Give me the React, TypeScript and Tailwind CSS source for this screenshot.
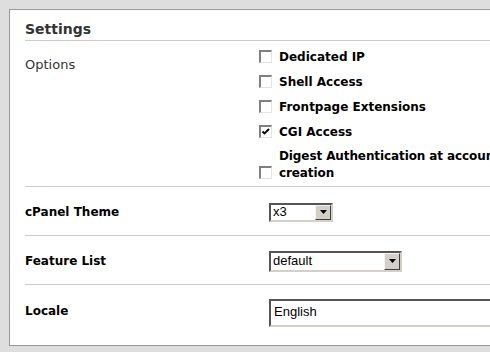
import React from "react";

const font = { fontFamily: '"DejaVu Sans", Verdana, sans-serif' };

function Checkbox({ checked }: { checked?: boolean }) {
  return (
    <div className="relative w-[13px] h-[13px] shrink-0 bg-white border-t-[#808080] border-l-[#808080] border-b-[#e4e4e4] border-r-[#e4e4e4] border-t-2 border-l-2 border-b border-r">
      {checked && (
        <svg className="absolute left-0 top-0" width="10" height="10" viewBox="0 0 10 10">
          <path d="M1.5 4.5 L3.5 6.5 L8 2" stroke="#000" strokeWidth="1.8" fill="none" />
        </svg>
      )}
    </div>
  );
}

function Select({ value, width, height }: { value: string; width: string; height: string }) {
  return (
    <div
      className={`flex items-center bg-white border-2 border-t-[#555] border-l-[#555] border-b-[#d4d0c8] border-r-[#d4d0c8] ${width} ${height}`}
    >
      <span className="flex-1 pl-[2px] text-[13px] text-black" style={{ fontFamily: '"Liberation Sans", Arial, sans-serif' }}>
        {value}
      </span>
      <div className="w-[16px] h-full flex items-center justify-center bg-[#d4d0c8] border border-t-[#f4f4f4] border-l-[#f4f4f4] border-b-[#404040] border-r-[#404040]">
        <svg width="7" height="4" viewBox="0 0 7 4">
          <path d="M0 0 H7 L3.5 4 Z" fill="#000" />
        </svg>
      </div>
    </div>
  );
}

export default function App() {
  const opts: { label: React.ReactNode; checked?: boolean }[] = [
    { label: "Dedicated IP" },
    { label: "Shell Access" },
    { label: "Frontpage Extensions" },
    { label: "CGI Access", checked: true },
  ];
  return (
    <div className="w-[490px] h-[352px] bg-[#dedede] pt-[9px] pl-[9px] overflow-hidden" style={font}>
      <div className="h-[337px] bg-white border-t border-l border-b border-[#999] pl-[15px]">
        <div className="h-[31px] border-b border-[#cccccc] flex items-end pb-[4px]">
          <span className="text-[14px] font-bold text-[#333] leading-none">Settings</span>
        </div>
        <div className="h-[146px] flex border-b border-[#cccccc]">
          <div className="w-[234px] shrink-0 pt-[17px] text-[13px] text-[#333] leading-none">Options</div>
          <div className="flex flex-col pt-[3px] min-w-0">
            {opts.map((o, i) => (
              <div key={i} className="h-[25px] flex items-center gap-[7px]">
                <Checkbox checked={o.checked} />
                <span className="text-[12px] font-bold text-black">{o.label}</span>
              </div>
            ))}
            <div className="flex items-end gap-[7px] mt-[4px]">
              <div className="mb-[3px]">
                <Checkbox />
              </div>
              <span className="text-[12px] font-bold text-black leading-[17px] whitespace-nowrap tracking-[-0.1px]">
                Digest Authentication at accoun
                <br />
                creation
              </span>
            </div>
          </div>
        </div>
        <div className="h-[49px] flex items-center border-b border-[#cccccc] pt-[2px]">
          <div className="w-[244px] shrink-0 text-[12px] font-bold text-black">cPanel Theme</div>
          <Select value="x3" width="w-[64px]" height="h-[19px]" />
        </div>
        <div className="h-[49px] flex items-center border-b border-[#cccccc] pt-[2px]">
          <div className="w-[244px] shrink-0 text-[12px] font-bold text-black">Feature List</div>
          <Select value="default" width="w-[133px]" height="h-[21px]" />
        </div>
        <div className="h-[60px] flex items-start pt-[14px]">
          <div className="w-[244px] shrink-0 pt-[3px] text-[12px] font-bold text-black">Locale</div>
          <div className="flex-1 h-[28px] bg-white border-2 border-r-0 border-t-[#555] border-l-[#555] border-b-[#d4d0c8] pl-[3px] text-[13px] text-black leading-[22px]" style={{ fontFamily: '"Liberation Sans", Arial, sans-serif' }}>
            English
          </div>
        </div>
      </div>
    </div>
  );
}
